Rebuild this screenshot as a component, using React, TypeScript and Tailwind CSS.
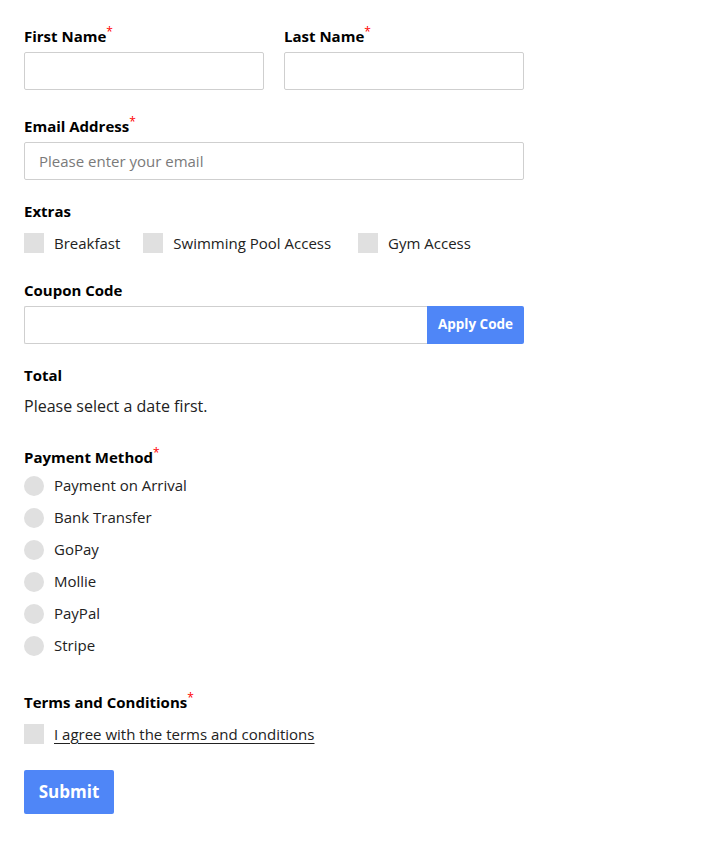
import React from 'react'

function Label({ text, required }: { text: string; required?: boolean }) {
  return (
    <label className="block text-[15px] leading-5 font-bold text-black">
      {text}
      {required && <sup className="text-[12px] font-normal text-[#ff0000] top-[-0.5em]">*</sup>}
    </label>
  )
}

function Box({ round }: { round?: boolean }) {
  return <span className={`block w-[20px] h-[20px] shrink-0 bg-[#e0e0e0] ${round ? 'rounded-full' : ''}`} />
}

const payments = ['Payment on Arrival', 'Bank Transfer', 'GoPay', 'Mollie', 'PayPal', 'Stripe']

export default function App() {
  return (
    <div className="min-h-[850px] bg-white px-6 pt-[26px] font-['Open_Sans',sans-serif] text-[#222]">
      <form className="w-[500px]">
        {/* Names */}
        <div className="flex gap-5">
          <div className="w-[240px]">
            <Label text="First Name" required />
            <input className="mt-[6px] block w-full h-[38px] border border-[#cfcfcf] rounded-[2px] px-[14px] text-[15px]" />
          </div>
          <div className="w-[240px]">
            <Label text="Last Name" required />
            <input className="mt-[6px] block w-full h-[38px] border border-[#cfcfcf] rounded-[2px] px-[14px] text-[15px]" />
          </div>
        </div>

        {/* Email */}
        <div className="mt-[26px]">
          <Label text="Email Address" required />
          <input
            placeholder="Please enter your email"
            className="mt-[6px] block w-full h-[38px] border border-[#cfcfcf] rounded-[2px] px-[14px] text-[15px] placeholder:text-[#7a7a7a]"
          />
        </div>

        {/* Extras */}
        <div className="mt-[21px]">
          <Label text="Extras" />
          <div className="mt-[11px] flex items-center text-[15px] text-[#222]">
            <label className="flex items-center gap-[10px] mr-[23px]"><Box />Breakfast</label>
            <label className="flex items-center gap-[10px] mr-[27px]"><Box />Swimming Pool Access</label>
            <label className="flex items-center gap-[10px]"><Box />Gym Access</label>
          </div>
        </div>

        {/* Coupon */}
        <div className="mt-[25px]">
          <Label text="Coupon Code" />
          <div className="mt-[6px] flex h-[38px]">
            <input className="flex-1 min-w-0 border border-[#cfcfcf] border-r-0 rounded-l-[2px] px-[14px] text-[15px]" />
            <button type="button" className="w-[97px] bg-[#4f86f7] text-white text-[13.5px] font-bold rounded-r-[2px]">
              Apply Code
            </button>
          </div>
        </div>

        {/* Total */}
        <div className="mt-[21px]">
          <Label text="Total" />
          <p className="mt-[9px] text-[16px] leading-6 text-[#222]">Please select a date first.</p>
        </div>

        {/* Payment */}
        <div className="mt-[29px]">
          <Label text="Payment Method" required />
          <div className="mt-[9px] flex flex-col gap-[12px] text-[15px]">
            {payments.map((p) => (
              <label key={p} className="flex items-center gap-[10px] h-[20px]">
                <Box round />
                {p}
              </label>
            ))}
          </div>
        </div>

        {/* Terms */}
        <div className="mt-[36px]">
          <Label text="Terms and Conditions" required />
          <label className="mt-[11px] flex items-center gap-[10px] text-[15px]">
            <Box />
            <span className="underline underline-offset-[3px]">I agree with the terms and conditions</span>
          </label>
        </div>

        <button type="submit" className="mt-[25px] w-[90px] h-[44px] bg-[#4f86f7] text-white text-[17px] font-bold rounded-[2px]">
          Submit
        </button>
      </form>
    </div>
  )
}
